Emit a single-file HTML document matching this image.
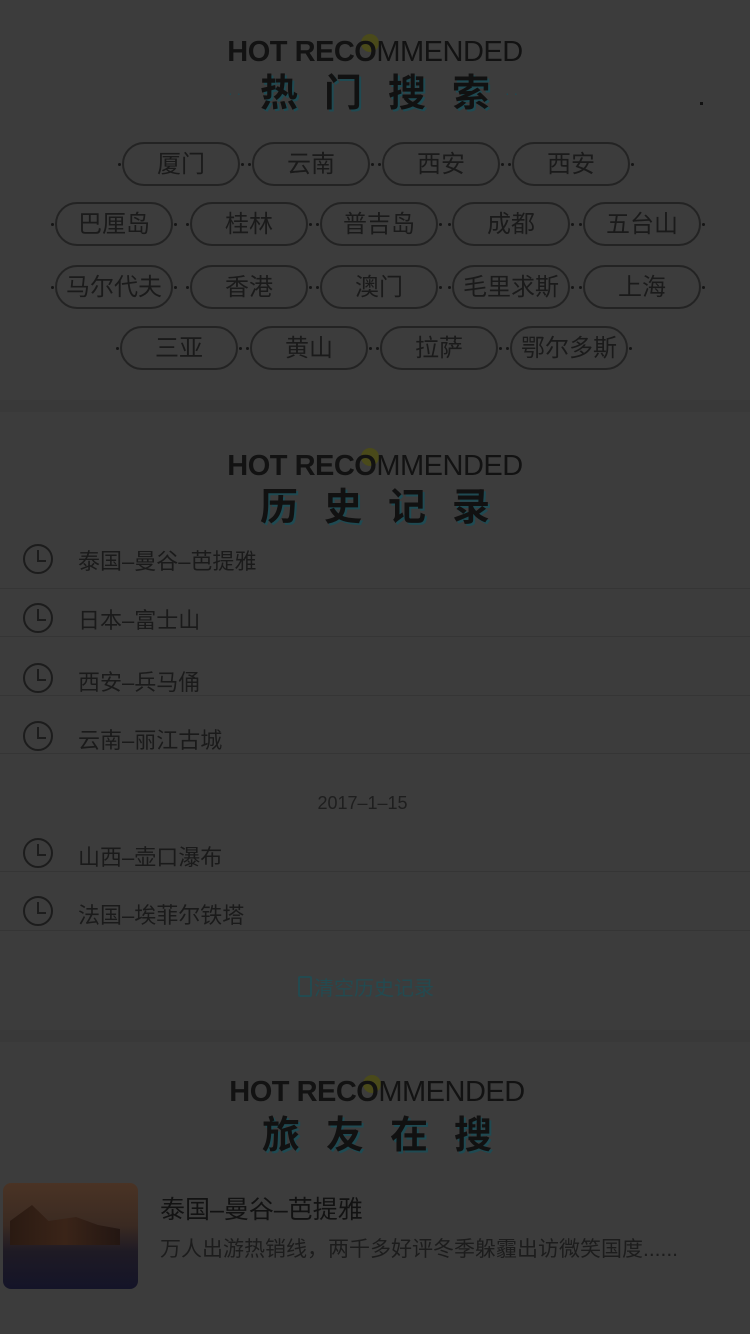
<!DOCTYPE html>
<html><head><meta charset="utf-8"><style>
*{margin:0;padding:0;box-sizing:border-box}
body{width:750px;height:1334px;background:#3c3c3c;position:relative;overflow:hidden;font-family:"Liberation Sans","Noto Sans CJK SC",sans-serif;color:#1c1c1c}
.a{position:absolute}
.en{position:absolute;left:0;width:750px;text-align:center;font-size:29px;color:#121212;letter-spacing:-0.5px}
.en b{font-weight:bold}
.dot{position:absolute;width:18px;height:18px;border-radius:50%;background:#4a4a1a}
.cn{position:absolute;left:0;width:750px;text-align:center;font-size:38px;font-weight:bold;color:#111;letter-spacing:26px;text-shadow:2px 2px 0 #1f4a52}
.tag{position:absolute;width:118px;height:44px;border:2px solid #232323;border-radius:22px;text-align:center;line-height:42px;font-size:24px;color:#1a1a1a}
.tag:before,.tag:after{content:"";position:absolute;top:19px;width:3px;height:3px;background:#151515;border-radius:50%}
.tag:before{left:-6px}.tag:after{right:-6px}
.h{position:absolute;left:0;width:750px;height:59px;border-bottom:1px solid #353535}
.h .c{position:absolute;left:23px;top:14px;width:30px;height:30px;border:2px solid #1c1c1c;border-radius:50%}
.h .c:before{content:"";position:absolute;left:12px;top:4px;width:2px;height:11px;background:#1c1c1c}
.h .c:after{content:"";position:absolute;left:12px;top:14px;width:9px;height:2px;background:#1c1c1c}
.h span{position:absolute;left:78px;top:14px;font-size:22px;color:#1a1a1a}
</style></head><body>

<div class="dot" style="left:361px;top:34px"></div>
<div class="en" style="top:36px"><b>HOT RECO</b>MMENDED</div>
<div class="cn" style="top:62px;padding-left:26px">热门搜索</div>
<div class="a" style="left:228px;top:85px;color:#1f4a52;font-size:14px">· ·</div>
<div class="a" style="left:505px;top:85px;color:#1f4a52;font-size:14px">· ·</div>
<div class="a" style="left:700px;top:102px;width:3px;height:3px;background:#111"></div>

<div class="tag" style="left:122px;top:142px">厦门</div>
<div class="tag" style="left:252px;top:142px">云南</div>
<div class="tag" style="left:382px;top:142px">西安</div>
<div class="tag" style="left:512px;top:142px">西安</div>
<div class="tag" style="left:55px;top:202px">巴厘岛</div>
<div class="tag" style="left:190px;top:202px">桂林</div>
<div class="tag" style="left:320px;top:202px">普吉岛</div>
<div class="tag" style="left:452px;top:202px">成都</div>
<div class="tag" style="left:583px;top:202px">五台山</div>
<div class="tag" style="left:55px;top:265px">马尔代夫</div>
<div class="tag" style="left:190px;top:265px">香港</div>
<div class="tag" style="left:320px;top:265px">澳门</div>
<div class="tag" style="left:452px;top:265px">毛里求斯</div>
<div class="tag" style="left:583px;top:265px">上海</div>
<div class="tag" style="left:120px;top:326px">三亚</div>
<div class="tag" style="left:250px;top:326px">黄山</div>
<div class="tag" style="left:380px;top:326px">拉萨</div>
<div class="tag" style="left:510px;top:326px">鄂尔多斯</div>

<div class="a" style="left:0;top:400px;width:750px;height:12px;background:#393939"></div>

<div class="dot" style="left:361px;top:448px"></div>
<div class="en" style="top:450px"><b>HOT RECO</b>MMENDED</div>
<div class="cn" style="top:476px;padding-left:26px">历史记录</div>

<div class="h" style="top:530px"><div class="c"></div><span>泰国–曼谷–芭提雅</span></div>
<div class="h" style="top:589px;height:48px"><div class="c"></div><span>日本–富士山</span></div>
<div class="h" style="top:637px;height:59px"><div class="c" style="top:26px"></div><span style="top:28px">西安–兵马俑</span></div>
<div class="h" style="top:696px;height:58px"><div class="c" style="top:25px"></div><span style="top:27px">云南–丽江古城</span></div>
<div class="a" style="left:0;top:793px;width:725px;text-align:center;font-size:18px;color:#1e1e1e">2017–1–15</div>
<div class="h" style="top:813px;height:59px;"><div class="c" style="top:25px"></div><span style="top:27px">山西–壶口瀑布</span></div>
<div class="h" style="top:872px;height:59px"><div class="c" style="top:24px"></div><span style="top:26px">法国–埃菲尔铁塔</span></div>

<div class="a" style="left:298px;top:976px;width:14px;height:21px;border:2px solid #234a50;border-radius:2px"></div>
<div class="a" style="left:314px;top:972px;font-size:20px;color:#234a50">清空历史记录</div>

<div class="a" style="left:0;top:1030px;width:750px;height:12px;background:#393939"></div>

<div class="dot" style="left:363px;top:1075px"></div>
<div class="en" style="top:1076px;left:2px"><b>HOT RECO</b>MMENDED</div>
<div class="cn" style="top:1104px;padding-left:30px">旅友在搜</div>

<div class="a" style="left:3px;top:1183px;width:135px;height:106px;border-radius:8px;background:linear-gradient(180deg,#4a3324 0%,#3a2a22 40%,#1e1a24 65%,#141428 100%)"></div>
<div class="a" style="left:10px;top:1205px;width:110px;height:40px;background:linear-gradient(90deg,#2a1a12,#3a2418,#231612);clip-path:polygon(0 40%,20% 0,35% 40%,60% 30%,80% 50%,100% 60%,100% 100%,0 100%)"></div>
<div class="a" style="left:160px;top:1190px;font-size:25px;color:#121212">泰国–曼谷–芭提雅</div>
<div class="a" style="left:160px;top:1233px;font-size:21px;color:#1c1c1c;white-space:nowrap">万人出游热销线，两千多好评冬季躲霾出访微笑国度......</div>
</body></html>
